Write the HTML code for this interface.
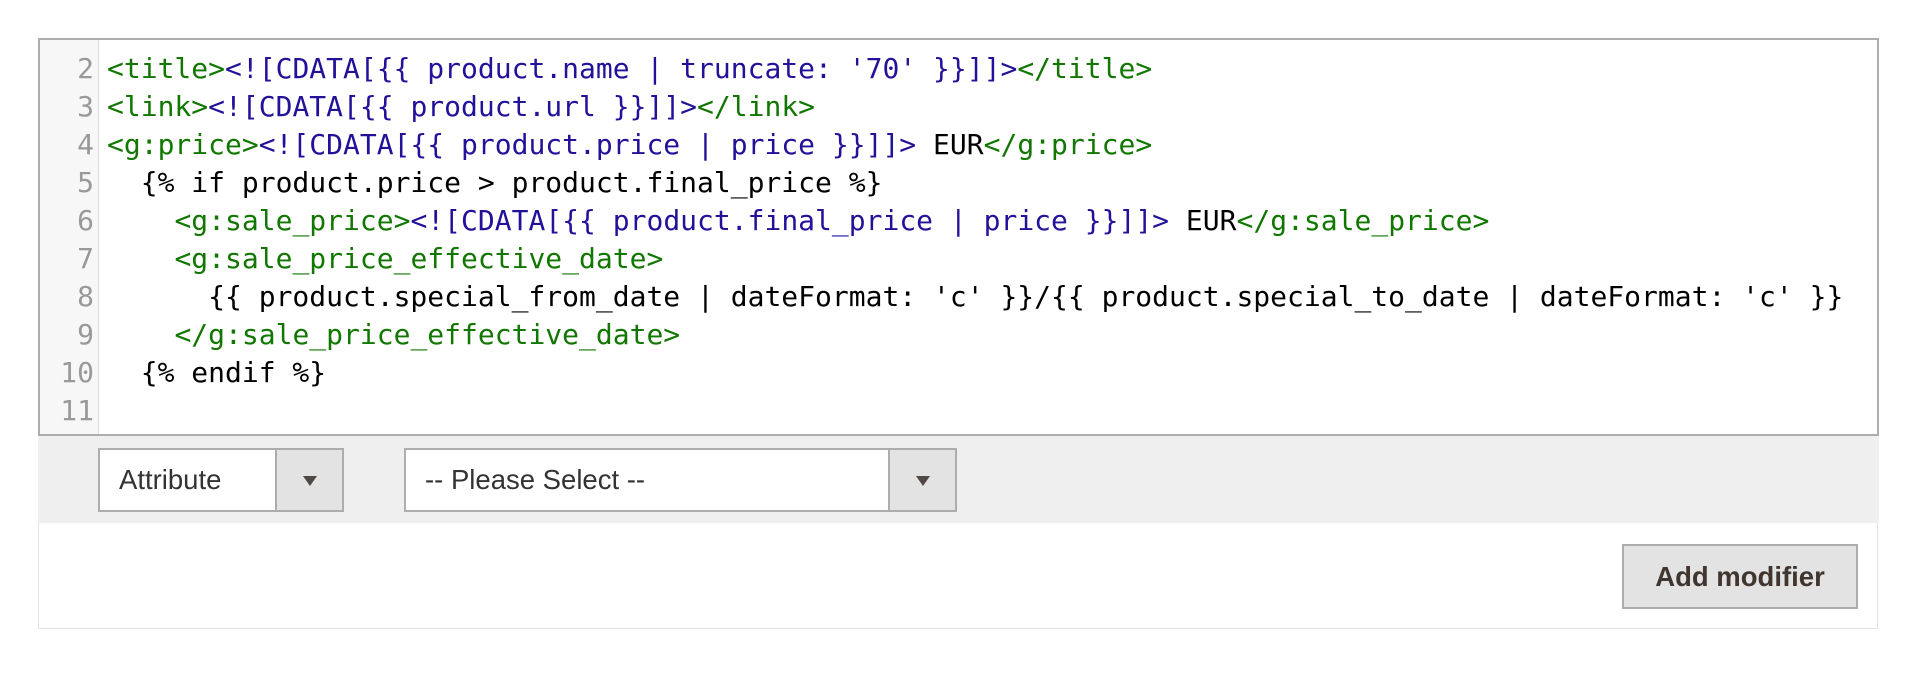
<!DOCTYPE html>
<html><head><meta charset="utf-8"><style>
body{margin:0;width:1920px;height:676px;background:#fff;position:relative;overflow:hidden;font-family:"Liberation Sans",sans-serif}
.outer{position:absolute;left:38px;top:38px;width:1840px;height:591px;border:1px solid #e3e3e3;border-top:none;box-sizing:border-box}
.ed{position:absolute;left:38px;top:38px;width:1841px;height:398px;border:2px solid #adadad;box-sizing:border-box;background:#fff}
.gut{position:absolute;left:0;top:0;width:58px;height:100%;background:#f7f7f7;border-right:1px solid #ddd}
.code{position:absolute;left:0;top:10px;font-family:"DejaVu Sans Mono","Liberation Mono",monospace;font-size:28px;line-height:38px;white-space:pre}
.ln{display:inline-block;width:54px;text-align:right;color:#999;margin-right:13px}
.t{color:#170}.c{color:#219}
.bar{position:absolute;left:38px;top:436px;width:1841px;height:87px;background:#efefef}
.sel{position:absolute;top:448px;height:64px;border:2px solid #adadad;box-sizing:border-box;background:#fff;font-size:27.5px;color:#333;line-height:60px;padding-left:19px}
.sel .ar{position:absolute;right:0;top:0;width:67px;height:100%;background:#e3e3e3;border-left:2px solid #adadad;box-sizing:border-box}
.sel .ar:after{content:"";position:absolute;left:26px;top:26px;border-left:7px solid transparent;border-right:7px solid transparent;border-top:10px solid #514943}
.btn{position:absolute;left:1622px;top:544px;width:236px;height:65px;border:2px solid #adadad;box-sizing:border-box;background:#e3e3e3;color:#41362f;font-size:27.5px;font-weight:bold;text-align:center;line-height:61px}
</style></head><body>
<div class="outer"></div>
<div class="ed"><div class="gut"></div>
<div class="code"><span class="ln">2</span><span class="t">&lt;title&gt;</span><span class="c">&lt;![CDATA[{{ product.name | truncate: '70' }}]]&gt;</span><span class="t">&lt;/title&gt;</span>
<span class="ln">3</span><span class="t">&lt;link&gt;</span><span class="c">&lt;![CDATA[{{ product.url }}]]&gt;</span><span class="t">&lt;/link&gt;</span>
<span class="ln">4</span><span class="t">&lt;g:price&gt;</span><span class="c">&lt;![CDATA[{{ product.price | price }}]]&gt;</span> EUR<span class="t">&lt;/g:price&gt;</span>
<span class="ln">5</span>  {% if product.price &gt; product.final_price %}
<span class="ln">6</span>    <span class="t">&lt;g:sale_price&gt;</span><span class="c">&lt;![CDATA[{{ product.final_price | price }}]]&gt;</span> EUR<span class="t">&lt;/g:sale_price&gt;</span>
<span class="ln">7</span>    <span class="t">&lt;g:sale_price_effective_date&gt;</span>
<span class="ln">8</span>      {{ product.special_from_date | dateFormat: 'c' }}/{{ product.special_to_date | dateFormat: 'c' }}
<span class="ln">9</span>    <span class="t">&lt;/g:sale_price_effective_date&gt;</span>
<span class="ln">10</span>  {% endif %}
<span class="ln">11</span></div></div>
<div class="bar"></div>
<div class="sel" style="left:98px;width:246px">Attribute<div class="ar"></div></div>
<div class="sel" style="left:404px;width:553px">-- Please Select --<div class="ar"></div></div>
<div class="btn">Add modifier</div>
</body></html>
